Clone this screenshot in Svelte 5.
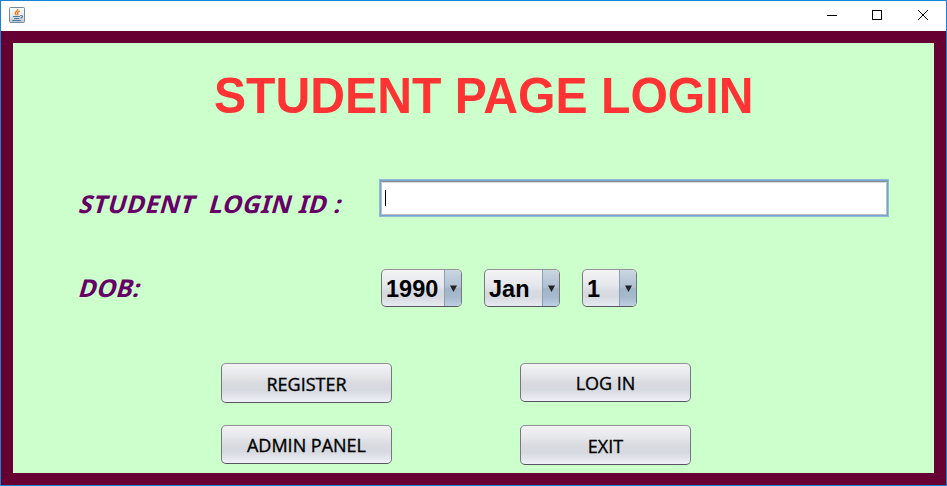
<script>
  let loginId = $state('');
  const dob = [
    { value: '1990', width: 81, gap: 22 },
    { value: 'Jan', width: 76, gap: 22 },
    { value: '1', width: 55, gap: 0 }
  ];
</script>

<div class="window">
  <header class="titlebar">
    <svg class="java" width="16" height="16" viewBox="0 0 16 16">
      <defs>
        <linearGradient id="tile" x1="0" y1="0" x2="0" y2="1">
          <stop offset="0" stop-color="#fbfcfc" />
          <stop offset="0.55" stop-color="#e6ebee" />
          <stop offset="1" stop-color="#b9c6d0" />
        </linearGradient>
      </defs>
      <rect x="0.5" y="0.5" width="15" height="15" rx="1" fill="url(#tile)" stroke="#748a9b" />
      <path d="M8.8 2C9.3 4 6 4.4 6.2 6.2Q6.3 7.2 7.5 8.2M10.8 4.2C8.8 4.8 8 5.7 8.7 6.6Q9.2 7.5 8.5 8.3" fill="none" stroke="#ef7d22" stroke-width="1.4" />
      <path d="M4 9.5H10.8M11.3 8.6C14.4 8 13.9 10.6 11.4 11.2M5 11.5H10.3M3.3 13.5H11.8" fill="none" stroke="#45759a" stroke-width="1.1" />
    </svg>
    <div class="controls">
      <svg width="46" height="30" viewBox="0 0 46 30"><path d="M19 14.5H29" stroke="#000" /></svg>
      <svg width="46" height="30" viewBox="0 0 46 30"><rect x="18.5" y="9.5" width="9" height="9" fill="none" stroke="#000" /></svg>
      <svg width="46" height="30" viewBox="0 0 46 30"><path d="M18 9L28 19M28 9L18 19" stroke="#000" stroke-width="1" /></svg>
    </div>
  </header>

  <main>
    <h1>STUDENT PAGE LOGIN</h1>
    <div class="row id-row">
      <label for="login"><span class="slant">STUDENT&nbsp; LOGIN ID :</span></label>
      <div class="field">
        <span class="caret"></span>
        <input id="login" bind:value={loginId} autocomplete="off" />
      </div>
    </div>
    <div class="row dob-row">
      <span class="label dob"><span class="slant">DOB:</span></span>
      {#each dob as part}
        <button class="combo" style="width:{part.width}px;margin-right:{part.gap}px">
          <span class="value">{part.value}</span>
          <span class="arrow">
            <svg width="7" height="7" viewBox="0 0 7 7"><path d="M0 0.5H7L3.5 7Z" fill="#222" /></svg>
          </span>
        </button>
      {/each}
    </div>
    <div class="actions">
      <div class="col">
        <button class="btn tall">REGISTER</button>
        <button class="btn">ADMIN PANEL</button>
      </div>
      <div class="col">
        <button class="btn">LOG IN</button>
        <button class="btn tall">EXIT</button>
      </div>
    </div>
  </main>
</div>

<style>
  :global(body) {
    margin: 0;
    overflow: hidden;
  }
  .window {
    box-sizing: border-box;
    width: 947px;
    height: 486px;
    border: 1px solid #1883d7;
    background: #fff;
    display: flex;
    flex-direction: column;
  }
  .titlebar {
    height: 30px;
    display: flex;
    justify-content: space-between;
  }
  .java {
    margin: 6px 0 0 8px;
  }
  .controls {
    display: flex;
  }
  svg {
    display: block;
  }
  main {
    box-sizing: border-box;
    height: 454px;
    border: 12px solid #660033;
    background: #ccffcc;
    display: flex;
    flex-direction: column;
  }
  h1 {
    margin: 25px 0 0 201px;
    height: 56px;
    font: bold 50px/56px 'Liberation Sans', Arial, sans-serif;
    transform: scaleX(0.963);
    transform-origin: left;
    color: #ff3333;
    white-space: nowrap;
  }
  .row {
    display: flex;
  }
  .id-row {
    margin: 55px 0 0 66px;
    height: 39px;
  }
  label,
  .label {
    flex: none;
    width: 300px;
    font: bold 24.5px/34px 'Noto Sans', Tahoma, sans-serif;
    color: #660066;
    white-space: nowrap;
  }
  label {
    padding-top: 8px;
  }
  .slant {
    display: inline-block;
    margin-left: 1px;
    letter-spacing: 0.6px;
    transform: skewX(-16deg);
  }
  .dob .slant {
    letter-spacing: 0.2px;
  }
  .field {
    box-sizing: border-box;
    width: 510px;
    height: 38px;
    border: 1px solid #8fbdd4;
    box-shadow: inset 0 0 0 1px #73a4d1, inset 0 2px #8d8e91, inset 0 3px #d8d8da, inset -2px -2px #c0c0c4, inset 2px 0 #c0c0c4;
    background: #fff;
    display: flex;
    align-items: center;
    padding-left: 5px;
  }
  .caret {
    width: 1px;
    height: 16px;
    margin-top: -1px;
    background: #000;
  }
  input {
    flex: 1;
    min-width: 0;
    border: 0;
    outline: 0;
    background: transparent;
    font: 20px 'Liberation Sans', Arial, sans-serif;
  }
  .dob-row {
    margin: 51px 0 0 66px;
    height: 39px;
  }
  .dob {
    width: 302px;
    line-height: 37px;
  }
  button {
    box-sizing: border-box;
    margin: 0;
    padding: 0;
    border: 1px solid #77787e;
    border-color: #929399 #77787e #55565e;
    border-radius: 5px;
    color: #000;
  }
  .combo {
    display: flex;
    height: 38px;
    overflow: hidden;
    background: linear-gradient(#f4f4f6, #e5e6eb 45%, #d8dae1 60%, #d6d9df 75%, #e8eaf1);
    font: bold 23.5px/38px 'Liberation Sans', Arial, sans-serif;
  }
  .value {
    flex: 1;
    text-align: left;
    padding-left: 4px;
  }
  .arrow {
    width: 16px;
    height: 36px;
    border-left: 1px solid #8ba0b5;
    background: linear-gradient(#cbd7e3, #afc0d1 48%, #a0b4c8 52%, #a7bacd 75%, #bdd0e3);
    display: flex;
    align-items: center;
    justify-content: center;
  }
  .actions {
    display: flex;
    gap: 128px;
    margin: 56px 0 0 208px;
  }
  .col {
    display: flex;
    flex-direction: column;
  }
  .btn {
    width: 171px;
    height: 39px;
    margin-bottom: 23px;
    background: linear-gradient(#f3f3f6, #e6e7eb 30%, #d9dbe1 50%, #d6d9df 70%, #f0f1f8);
    font: 400 18px/38px 'Open Sans', 'Segoe UI', sans-serif;
    -webkit-text-stroke: 0.35px #000;
    white-space: nowrap;
  }
  .tall {
    height: 40px;
    line-height: 40px;
    margin-bottom: 22px;
  }
</style>
